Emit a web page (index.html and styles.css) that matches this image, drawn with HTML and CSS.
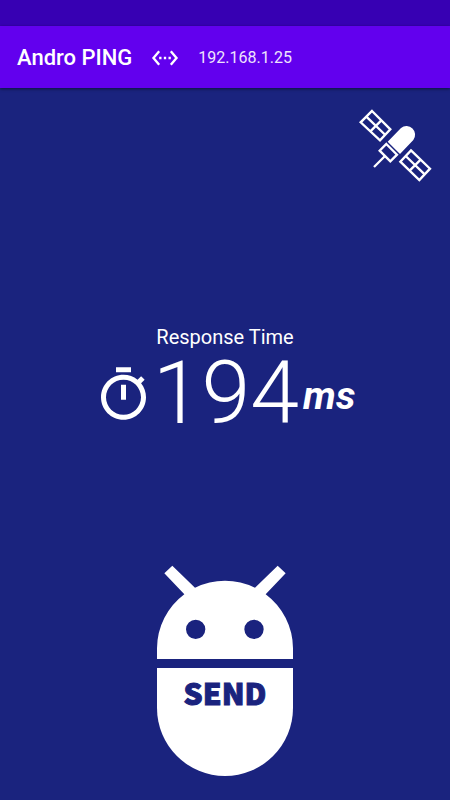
FILE: index.html
```html
<!DOCTYPE html>
<html lang="en">
<head>
<meta charset="utf-8">
<meta name="viewport" content="width=device-width, initial-scale=1">
<title>Andro PING</title>
<link rel="stylesheet" href="styles.css">
</head>
<body>
<div class="status-bar"></div>
<header class="app-bar">
  <h1 class="title">Andro PING</h1>
  <svg class="link-icon" viewBox="0 0 24 24" aria-hidden="true"><path d="M7.77 6.76L6.23 5.48.82 12l5.41 6.52 1.54-1.28L3.42 12l4.35-5.24zM7 13h2v-2H7v2zm10-2h-2v2h2v-2zm-6 2h2v-2h-2v2zm6.77-7.52l-1.54 1.28L20.58 12l-4.35 5.24 1.54 1.28L23.18 12l-5.41-6.52z"/></svg>
  <span class="address">192.168.1.25</span>
</header>
<main class="content">
  <svg class="satellite" viewBox="24 24 225 225" aria-hidden="true">
    <g class="outline">
      <path d="M66 33 121 88 90 121 32 67Z"/>
      <path d="M49 50 106 105M94 61 61 94"/>
      <path d="M183 151 240 206 208 240 151 185Z"/>
      <path d="M167 168 224 223M212 179 179 212"/>
      <path d="M109 132 141 164 121 184 89 152Z"/>
      <path d="M105 168 72 201"/>
    </g>
    <path d="M113 125 153 84A26 26 0 0 1 190 120L150 162Z"/>
  </svg>
  <section class="result">
    <h2 class="label">Response Time</h2>
    <div class="reading">
      <svg class="timer" viewBox="3 1 18 21" aria-hidden="true"><path d="M15 1H9v2h6V1zm-4 13h2V8h-2v6zm8.03-6.61l1.42-1.42c-.43-.51-.9-.99-1.41-1.41l-1.42 1.42C16.07 4.74 14.12 4 12 4c-4.97 0-9 4.03-9 9s4.02 9 9 9 9-4.03 9-9c0-2.12-.74-4.07-1.97-5.61zM12 20c-3.87 0-7-3.13-7-7s3.13-7 7-7 7 3.13 7 7-3.13 7-7 7z"/></svg>
      <span class="value">194</span>
      <span class="unit">ms</span>
    </div>
  </section>
  <button class="send" type="button">
    <svg class="head" viewBox="36 30 408 282" aria-hidden="true">
      <path fill-rule="evenodd" d="M36 312V280A204 204 0 0 1 118 118L58 55 82 32 150 98A204 204 0 0 1 330 98L398 32 422 55 362 118A204 204 0 0 1 444 280V312ZM123 223a29 29 0 1 0 58 0a29 29 0 1 0-58 0ZM298 223a29 29 0 1 0 58 0a29 29 0 1 0-58 0Z"/>
    </svg>
    <span class="body">SEND</span>
  </button>
</main>
</body>
</html>
```
FILE: styles.css
```css
* {
  box-sizing: border-box;
}

body {
  margin: 0;
  min-height: 100vh;
  display: flex;
  flex-direction: column;
  background: #1a237e;
  color: #fff;
  font-family: Roboto, sans-serif;
}

svg {
  display: block;
  flex: none;
  fill: currentColor;
}

.status-bar {
  height: 26px;
  background: #3700b3;
}

.app-bar {
  display: flex;
  align-items: center;
  height: 62px;
  padding: 2px 17px 0;
  background: #6200ee;
  box-shadow: 0 1px 3px rgba(0, 0, 0, 0.5);
}

.title {
  margin: 0;
  font-size: 22px;
  font-weight: 500;
  line-height: 28px;
}

.link-icon {
  width: 28px;
  height: 28px;
  margin: 0 19px;
}

.address {
  font-size: 16px;
  line-height: 20px;
  color: #eee3fd;
}

.content {
  flex: 1;
  display: flex;
  flex-direction: column;
  align-items: center;
  padding: 20px 17px 24px;
}

.satellite {
  width: 75px;
  height: 75px;
  align-self: flex-end;
}

.outline {
  fill: none;
  stroke: currentColor;
  stroke-width: 7;
}

.result {
  margin: auto 0;
  padding-top: 14px;
  text-align: center;
}

.label {
  margin: 0;
  font-size: 20px;
  font-weight: 400;
  line-height: 24px;
}

.reading {
  display: flex;
  align-items: center;
  padding-left: 6px;
  line-height: 88px;
}

.timer {
  width: 45px;
  height: 53px;
}

.value {
  margin: 0 4px 0 7px;
  font-size: 88px;
  font-weight: 300;
}

.unit {
  padding-top: 6px;
  font-size: 39px;
  font-style: italic;
  font-weight: 700;
  line-height: 40px;
}

.send {
  display: flex;
  flex-direction: column;
  gap: 9px;
  width: 136px;
  padding: 0;
  border: 0;
  background: none;
  color: #fff;
  cursor: pointer;
}

.head {
  width: 100%;
  height: 94px;
}

.body {
  width: 100%;
  height: 108px;
  padding-top: 6px;
  border-radius: 0 0 68px 68px;
  background: #fff;
  color: #1a237e;
  font-family: "Noto Sans CJK JP", sans-serif;
  font-size: 30px;
  font-weight: 900;
  line-height: 36px;
  -webkit-text-stroke: 1px #1a237e;
}
```
